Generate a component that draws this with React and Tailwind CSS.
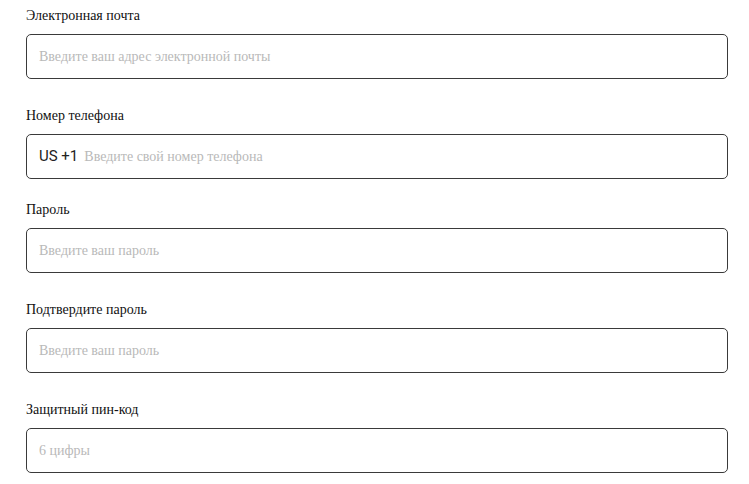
import React from 'react';

const Field = ({ label, placeholder, prefix, type = 'text', className = '' }) => {
    return (
        <div className={className}>
            <label className="block h-5 text-[14px] leading-5 text-[#111]">{label}</label>
            <div className="mt-2 flex h-[45px] items-center rounded-[5px] border border-[#3a3a3a] bg-white px-3">
                {prefix && (
                    <span className="mr-[6px] shrink-0 whitespace-nowrap text-[15px] text-[#222] [font-family:Roboto,'Liberation_Sans',sans-serif]">
                        {prefix}
                    </span>
                )}
                <input
                    type={type}
                    placeholder={placeholder}
                    className="w-full min-w-0 bg-transparent text-[14px] outline-none [font-family:'Liberation_Serif','Times_New_Roman',serif] placeholder:text-[#b9b9b9]"
                />
            </div>
        </div>
    );
};

const App = () => {
    return (
        <div className="min-h-screen bg-white [font-family:'Liberation_Serif','Times_New_Roman',serif]">
            <div className="w-[702px] pl-[26px] pt-[6px] box-content">
                {/* Sign up form */}
                <Field label="Электронная почта" placeholder="Введите ваш адрес электронной почты" className="mb-[27px]" />
                <Field label="Номер телефона" placeholder="Введите свой номер телефона" prefix="US +1" className="mb-[21px]" />
                <Field label="Пароль" placeholder="Введите ваш пароль" type="password" className="mb-[27px]" />
                <Field label="Подтвердите пароль" placeholder="Введите ваш пароль" type="password" className="mb-[27px]" />
                <Field label="Защитный пин-код" placeholder="6 цифры" />
            </div>
        </div>
    );
};

export default App;
